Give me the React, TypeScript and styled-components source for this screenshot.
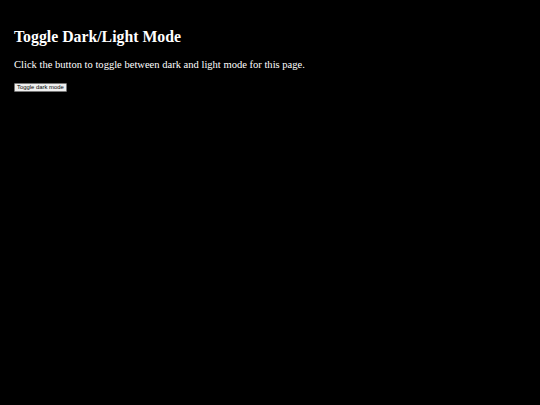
import React, {useState} from 'react'
import styled, {createGlobalStyle} from 'styled-components'

const GlobalStyle = createGlobalStyle<{dark: boolean}>`
  body {
    margin: 0;
    padding: 0 14px;
    background: ${(p) => (p.dark ? '#000' : '#fff')};
    color: ${(p) => (p.dark ? '#fff' : '#000')};
    font-family: "Liberation Serif", "Times New Roman", serif;
  }
`

const Page = styled.div`
  padding-top: 28px;
`

const Title = styled.h2`
  font-size: 15.8px;
  margin: 0 0 13px;
`

const Text = styled.p`
  font-size: 10.55px;
  margin: 0 0 13px;
`

const ToggleButton = styled.button`
  display: block;
  font-family: "Liberation Sans", Arial, sans-serif;
  font-size: 5.9px;
  line-height: 7px;
  padding: 0 2px;
  border: 1px solid #767676;
  border-radius: 1px;
  background: #efefef;
  color: #000;
`

const App = () => {
  const [dark, setDark] = useState(true)
  return (
    <Page>
      <GlobalStyle dark={dark} />
      <Title>Toggle Dark/Light Mode</Title>
      <Text>Click the button to toggle between dark and light mode for this page.</Text>
      <ToggleButton onClick={() => setDark(!dark)}>Toggle dark mode</ToggleButton>
    </Page>
  )
}

export default App
